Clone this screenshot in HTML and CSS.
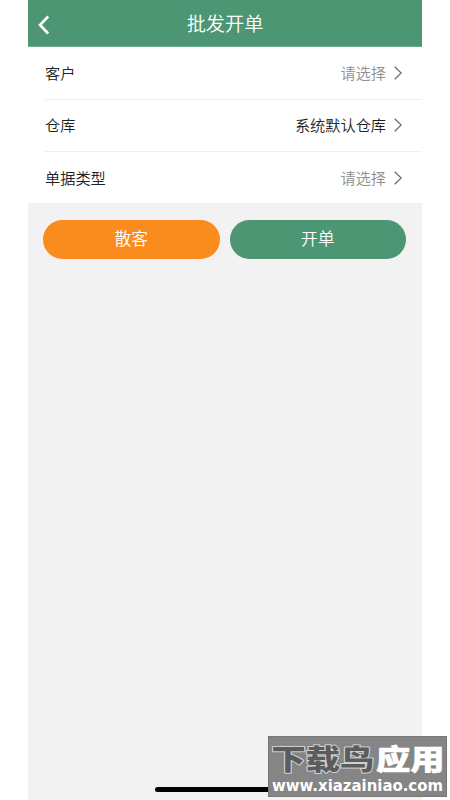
FILE: index.html
```html
<!DOCTYPE html>
<html lang="zh-CN">
<head>
<meta charset="utf-8">
<title>批发开单</title>
<link rel="stylesheet" href="styles.css">
</head>
<body>
<main class="screen">
  <header class="bar">
    <svg class="back" viewBox="0 0 12 20"><path d="M10.2 1.5 2 10l8.2 8.5"/></svg>
    <h1 class="title">批发开单</h1>
  </header>
  <section class="form">
    <div class="row"><span>客户</span><span class="value empty">请选择</span><svg class="arrow" viewBox="0 0 8 14"><path d="M.7.7 7.2 7 .7 13.3"/></svg></div>
    <div class="row"><span>仓库</span><span class="value">系统默认仓库</span><svg class="arrow" viewBox="0 0 8 14"><path d="M.7.7 7.2 7 .7 13.3"/></svg></div>
    <div class="row"><span>单据类型</span><span class="value empty">请选择</span><svg class="arrow" viewBox="0 0 8 14"><path d="M.7.7 7.2 7 .7 13.3"/></svg></div>
  </section>
  <div class="actions">
    <button class="btn guest">散客</button>
    <button class="btn create">开单</button>
  </div>
  <div class="home"></div>
</main>
<svg class="mark" viewBox="0 0 179 61">
  <rect class="plate" x=".5" y=".5" width="178" height="60"/>
  <g transform="scale(1.2 1)">
    <text class="name dark" x="3" y="34">下载鸟</text>
    <text class="name light" x="90" y="34">应用</text>
  </g>
  <text class="url" x="4" y="54.5" textLength="171" lengthAdjust="spacingAndGlyphs">www.xiazainiao.com</text>
</svg>
</body>
</html>
```

FILE: styles.css
```css
* { box-sizing: border-box; }
body {
  margin: 0;
  height: 800px;
  position: relative;
  overflow: hidden;
  background: #fff;
  color: #222;
  font-family: "Noto Sans CJK SC", sans-serif;
  font-weight: 350;
}
.screen {
  width: 394px;
  height: 800px;
  margin-left: 28px;
  background: #f2f2f2;
  display: flex;
  flex-direction: column;
}
.bar {
  height: 47px;
  flex: none;
  display: grid;
  grid-template-columns: 40px 1fr 40px;
  align-items: center;
  background: #4c9674;
  border-bottom: 1px solid #6faa8e;
  color: #fff;
}
.back {
  width: 12px;
  height: 20px;
  margin: 3px 0 0 10px;
  fill: none;
  stroke: #fff;
  stroke-width: 2.6;
}
.title {
  margin: 0;
  text-align: center;
  font-size: 19.2px;
  line-height: 28px;
  font-weight: 350;
}
.form {
  background: #fff;
  padding-left: 16px;
}
.row {
  height: 52px;
  padding: 0 20px 0 1px;
  display: flex;
  align-items: center;
  font-size: 15.2px;
  line-height: 22px;
}
.row span { padding-bottom: 3px; }
.row + .row { border-top: 1px solid #f0f0f0; }
.value { margin-left: auto; }
.empty { color: #8f8f8f; }
.arrow {
  width: 8px;
  height: 14px;
  margin-left: 8px;
  fill: none;
  stroke: #666;
  stroke-width: 1.2;
}
.row + .row .arrow { margin-bottom: 1px; }
.row:last-child { padding-top: 1px; }
.actions {
  display: flex;
  gap: 10px;
  padding: 17px 16px 0 15px;
}
.btn {
  flex: 1;
  height: 39px;
  padding: 0 0 2px;
  border: 0;
  border-radius: 20px;
  color: #fff;
  font-family: inherit;
  font-size: 16.8px;
  font-weight: 350;
  line-height: 37px;
}
.guest { background: #fa8c1e; }
.create { background: #4c9674; }
.home {
  width: 140px;
  height: 5px;
  margin: auto auto 8px;
  border-radius: 3px;
  background: #000;
}
.mark {
  position: absolute;
  left: 268px;
  top: 736px;
  width: 179px;
  height: 61px;
  overflow: visible;
}
.plate {
  fill: #858585;
  stroke: #777;
}
.name {
  font-size: 28.5px;
  font-weight: 900;
  paint-order: stroke;
  stroke-linejoin: round;
}
.dark {
  fill: #5c5c5c;
  stroke: #d0d0d0;
  stroke-width: 2;
}
.light {
  fill: #fff;
  stroke: #fff;
  stroke-width: .6;
}
.url {
  fill: #fff;
  font-family: "DejaVu Sans", sans-serif;
  font-size: 15.5px;
  font-weight: 700;
}
```
